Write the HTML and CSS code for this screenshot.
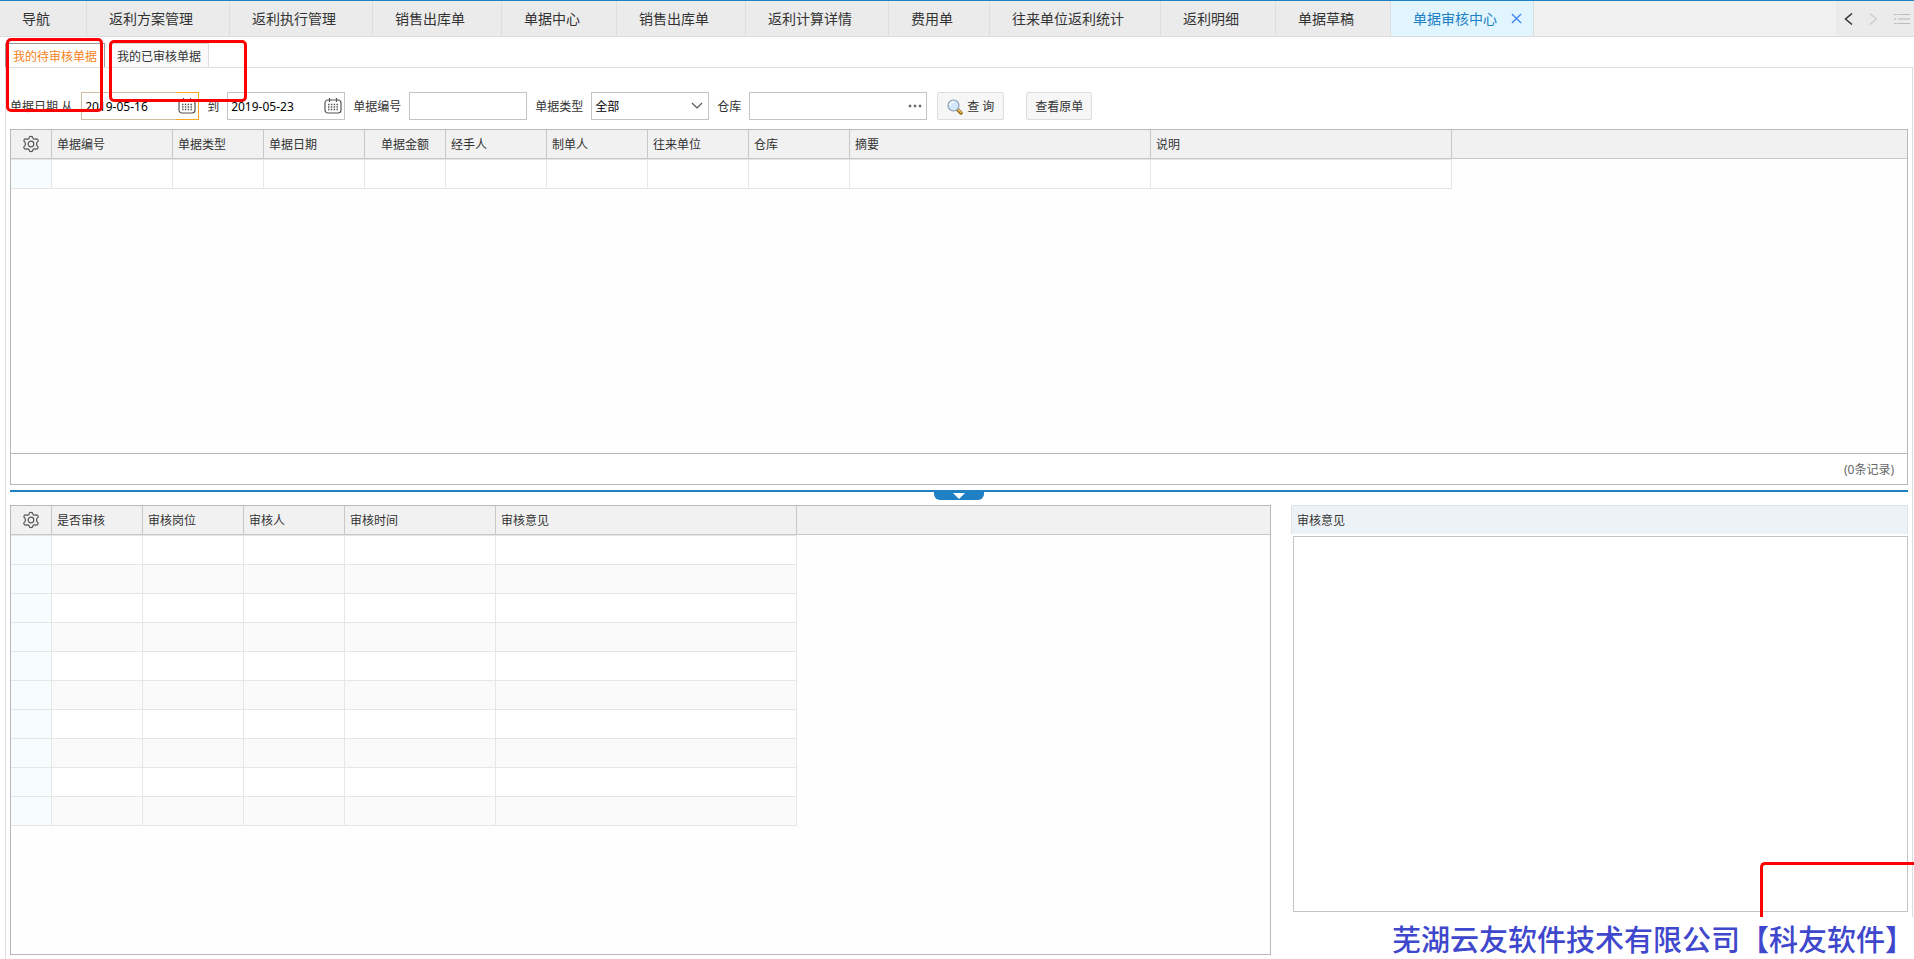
FILE: index.html
```html
<!DOCTYPE html>
<html lang="zh-CN">
<head>
<meta charset="utf-8">
<title>单据审核中心</title>
<link rel="stylesheet" href="styles.css">
</head>
<body>
<svg class="defs" aria-hidden="true">
  <symbol id="gear" viewBox="0 0 18 18"><path d="M7 3.200Q7.300 1.300 9 1.300T11 3.200Q11.500 4.600 13 4.100Q15 3.300 15.900 4.800T15.100 7.200Q13.800 9 15.100 10.800Q16.700 11.800 15.900 13.200T13 13.900Q11.500 13.400 11 14.800Q10.700 16.700 9 16.700T7 14.800Q6.500 13.400 5 13.900Q3 14.700 2.100 13.200T2.900 10.800Q4.200 9 2.900 7.200Q1.300 6.200 2.100 4.800T5 4.100Q6.500 4.600 7 3.200z" fill="none" stroke="#555" stroke-width="1.200" stroke-linejoin="round"/><circle cx="9" cy="9" r="2.800" fill="none" stroke="#555" stroke-width="1.200"/></symbol>
  <symbol id="calendar" viewBox="0 0 18 16"><rect x="1" y="2" width="16" height="13" rx="3" fill="none" stroke="#555" stroke-width="1.200"/><path d="M5.500 0v4M12.500 0v4" stroke="#555" stroke-width="1.200"/><path d="M4 6.500h10M4 9h10M4 11.500h10" stroke="#555" stroke-width="1.300" stroke-dasharray="1.500 1.330"/></symbol>
</svg>

<div class="app">
  <header class="topbar">
    <nav class="tabs">
      <button class="tab">导航</button>
      <button class="tab">返利方案管理</button>
      <button class="tab">返利执行管理</button>
      <button class="tab">销售出库单</button>
      <button class="tab">单据中心</button>
      <button class="tab">销售出库单</button>
      <button class="tab">返利计算详情</button>
      <button class="tab">费用单</button>
      <button class="tab">往来单位返利统计</button>
      <button class="tab">返利明细</button>
      <button class="tab">单据草稿</button>
      <button class="tab tab-active">单据审核中心<svg class="close" viewBox="0 0 12 12"><path d="M1 1l10 10M11 1L1 11" stroke="#4285f4" stroke-width="1.500"/></svg></button>
    </nav>
    <div class="tab-tools">
      <button class="tool" aria-label="向左"><svg width="9" height="12" viewBox="0 0 9 12"><path d="M8 .5L1.500 6 8 11.500" fill="none" stroke="#333" stroke-width="1.500"/></svg></button>
      <button class="tool" aria-label="向右"><svg width="9" height="12" viewBox="0 0 9 12"><path d="M1 .5L7.500 6 1 11.500" fill="none" stroke="#ccc" stroke-width="1.400"/></svg></button>
      <button class="tool" aria-label="列表"><svg width="16" height="12" viewBox="0 0 16 12"><path d="M0 1.500h3M4 1.500h12M0 10.500h3M4 10.500h12" stroke="#bbb"/><path d="M0 6h2M4 6h12" stroke="#d0d0d0" stroke-width="2"/></svg></button>
    </div>
  </header>

  <div class="subtabs">
    <button class="subtab subtab-active">我的待审核单据</button>
    <button class="subtab">我的已审核单据</button>
  </div>

  <main class="panel">
    <form class="filters">
      <label for="from">单据日期 从</label>
      <div class="field focused"><input id="from" type="text" value="2019-05-16"><button type="button" class="addon" aria-label="选择日期"><svg width="18" height="16"><use href="#calendar"/></svg></button></div>
      <label for="to">到</label>
      <div class="field"><input id="to" type="text" value="2019-05-23"><button type="button" class="addon" aria-label="选择日期"><svg width="18" height="16"><use href="#calendar"/></svg></button></div>
      <label for="no">单据编号</label>
      <div class="field"><input id="no" type="text"></div>
      <label for="type">单据类型</label>
      <div class="field"><select id="type"><option>全部</option></select><svg class="caret" width="12" height="8" viewBox="0 0 12 8"><path d="M1 1l5 5 5-5" fill="none" stroke="#555" stroke-width="1.200"/></svg></div>
      <label for="store">仓库</label>
      <div class="field wide"><input id="store" type="text"><button type="button" class="addon" aria-label="选择仓库"><svg width="14" height="4" viewBox="0 0 14 4"><g fill="#999" stroke="#555"><circle cx="2" cy="2" r="1"/><circle cx="7" cy="2" r="1"/><circle cx="12" cy="2" r="1"/></g></svg></button></div>
      <button type="button" class="btn btn-search"><svg width="16" height="16" viewBox="0 0 16 16"><path d="M10.500 10.500l3.500 3.500" stroke="#8a6418" stroke-width="3.400" stroke-linecap="round"/><path d="M11 10.500l3 3" stroke="#f0c555" stroke-width="1.600" stroke-linecap="round"/><circle cx="6.500" cy="6.500" r="5.500" fill="#d4e8fb" stroke="#8d9db0" stroke-width="1.200"/><path d="M3 6a3.500 3.500 0 0 1 4-3" stroke="#fff" stroke-width="1.500" fill="none"/></svg>查 询</button>
      <button type="button" class="btn btn-view">查看原单</button>
    </form>

    <section class="grid grid-main">
      <div class="grid-body">
        <table>
          <colgroup><col class="c41"><col class="c121"><col class="c91"><col class="c101"><col class="c81"><col class="c101"><col class="c101"><col class="c101"><col class="c101"><col class="c301"><col class="c301"><col></colgroup>
          <thead><tr><th class="cfg"><svg width="18" height="18"><use href="#gear"/></svg></th><th>单据编号</th><th>单据类型</th><th>单据日期</th><th class="num">单据金额</th><th>经手人</th><th>制单人</th><th>往来单位</th><th>仓库</th><th>摘要</th><th>说明</th><th class="rest"></th></tr></thead>
          <tbody><tr><td></td><td></td><td></td><td></td><td></td><td></td><td></td><td></td><td></td><td></td><td></td><td class="rest"></td></tr></tbody>
        </table>
      </div>
      <footer class="grid-foot">(0条记录)</footer>
    </section>

    <div class="splitter"><button class="handle" aria-label="收起"><svg width="12" height="6" viewBox="0 0 12 6"><path d="M0 0h12L6 6z" fill="#fff"/></svg></button></div>

    <div class="lower">
      <section class="grid grid-audit">
        <table>
          <colgroup><col class="c41"><col class="c91"><col class="c101"><col class="c101"><col class="c151"><col class="c301"><col></colgroup>
          <thead><tr><th class="cfg"><svg width="18" height="18"><use href="#gear"/></svg></th><th>是否审核</th><th>审核岗位</th><th>审核人</th><th>审核时间</th><th>审核意见</th><th class="rest"></th></tr></thead>
          <tbody>
            <tr><td></td><td></td><td></td><td></td><td></td><td></td><td class="rest"></td></tr>
            <tr><td></td><td></td><td></td><td></td><td></td><td></td><td class="rest"></td></tr>
            <tr><td></td><td></td><td></td><td></td><td></td><td></td><td class="rest"></td></tr>
            <tr><td></td><td></td><td></td><td></td><td></td><td></td><td class="rest"></td></tr>
            <tr><td></td><td></td><td></td><td></td><td></td><td></td><td class="rest"></td></tr>
            <tr><td></td><td></td><td></td><td></td><td></td><td></td><td class="rest"></td></tr>
            <tr><td></td><td></td><td></td><td></td><td></td><td></td><td class="rest"></td></tr>
            <tr><td></td><td></td><td></td><td></td><td></td><td></td><td class="rest"></td></tr>
            <tr><td></td><td></td><td></td><td></td><td></td><td></td><td class="rest"></td></tr>
            <tr><td></td><td></td><td></td><td></td><td></td><td></td><td class="rest"></td></tr>
          </tbody>
        </table>
      </section>
      <section class="opinion">
        <label class="opinion-title" for="opinion">审核意见</label>
        <textarea id="opinion"></textarea>
      </section>
    </div>
  </main>

  <div class="mark mark-pending"></div>
  <div class="mark mark-done"></div>
  <div class="mark mark-corner"></div>
  <div class="watermark">芜湖云友软件技术有限公司【科友软件】</div>
</div>
</body>
</html>
```
FILE: styles.css
```css
* { box-sizing: border-box; }
body {
  margin: 0;
  background: #fff;
  color: #333;
  font: 12px/16px "Noto Sans", "Noto Sans CJK SC", sans-serif;
}
button, input, select, textarea { font: inherit; color: inherit; margin: 0; }
button { padding: 0; border: 0; background: none; white-space: nowrap; }
svg { display: block; flex: none; }
.defs { position: absolute; width: 0; height: 0; }

.app {
  position: relative;
  display: flex;
  flex-direction: column;
  height: 100vh;
  overflow: hidden;
}

/* Top tab strip */
.topbar {
  display: flex;
  justify-content: space-between;
  height: 37px;
  background: #f1f1f1;
  border-top: 1px solid #2080c4;
  border-bottom: 1px solid #ddd;
}
.tabs { display: flex; }
.tab {
  display: flex;
  align-items: center;
  padding: 0 36px 0 22px;
  border-right: 1px solid #ddd;
  background: #ebebeb;
  font-size: 14px;
  line-height: 20px;
}
.tab-active { padding-right: 11px; background: #e0f5fd; color: #2080c4; }
.close { width: 11px; height: 11px; margin-left: 14px; }
.tab-tools {
  display: flex;
  align-items: center;
  gap: 16px;
  padding: 0 4px 0 8px;
  background: #ebebeb;
}

/* Secondary tabs */
.subtabs { display: flex; gap: 4px; padding: 6px 5px 0; }
.subtab {
  height: 24px;
  padding: 2px 7px 0;
  border: 1px solid #ddd;
  border-bottom: 0;
  background: #fafafa;
}
.subtab-active { border-color: #999; background: #fff; color: #f58220; }

.panel {
  flex: 1;
  min-height: 0;
  display: flex;
  flex-direction: column;
  margin: 0 1px 0 5px;
  padding: 24px 4px 4px;
  border: 1px solid #ddd;
  border-bottom: 0;
}

/* Filter row */
.filters { display: flex; align-items: center; gap: 8px; }
.filters label { padding-top: 2px; white-space: nowrap; }
.field {
  display: flex;
  align-items: center;
  width: 118px;
  height: 28px;
  border: 1px solid #c4c4c4;
  color: #000;
}
.field input, .field select {
  flex: 1;
  min-width: 0;
  height: 26px;
  padding: 1px 3px 0;
  border: 0;
  outline: 0;
  background: none;
  appearance: none;
}
.wide { width: 178px; }
.focused { border-color: #d0bea0; }
.addon {
  display: flex;
  align-items: center;
  justify-content: center;
  width: 22px;
  height: 26px;
}
.focused .addon { height: 28px; border: 1px solid #f5a623; border-width: 1px 0; box-shadow: 1px 0 #f5a623; }
.caret { margin-right: 5px; }
.btn {
  display: flex;
  align-items: center;
  height: 28px;
  padding: 1px 8px 0;
  border: 1px solid #ddd;
  border-radius: 2px;
  background: #f6f6f6;
}
.btn-search { gap: 4px; margin-left: 2px; padding: 1px 9px 0; }
.btn-view { margin-left: 14px; }

/* Grids */
.grid { border: 1px solid #b8b8b8; background: #fefefe; overflow: hidden; }
.grid-main {
  flex: 354 1 0;
  display: flex;
  flex-direction: column;
  margin-top: 9px;
}
.grid-body { flex: 1; }
.grid-foot {
  height: 31px;
  padding: 0 13px;
  border-top: 1px solid #b8b8b8;
  background: #fff;
  color: #666;
  line-height: 31px;
  text-align: right;
}
table { width: 100%; table-layout: fixed; border-collapse: separate; border-spacing: 0; }
.c41 { width: 41px; }
.c81 { width: 81px; }
.c91 { width: 91px; }
.c101 { width: 101px; }
.c121 { width: 121px; }
.c151 { width: 151px; }
.c301 { width: 301px; }
th {
  height: 29px;
  padding: 2px 5px 0;
  border-right: 1px solid #c8c8c8;
  border-bottom: 1px solid #c8c8c8;
  background: #f1f1f1;
  font-weight: normal;
  text-align: left;
}
th.cfg { padding: 0 11px; }
th.num { padding-right: 16px; text-align: right; }
th.rest { border-right: 0; }
td {
  height: 29px;
  padding: 0;
  border-right: 1px solid #e6e6e6;
  border-bottom: 1px solid #e6e6e6;
  background: #fff;
}
tr:nth-child(even) td { background: #fafafa; }
tbody tr:first-child td { height: 30px; border-top: 1px solid #e6e6e6; }
tbody td:first-child, tbody tr:nth-child(even) td:first-child { background: #f7fcff; }
tbody tr td.rest, tbody tr:first-child td.rest, tbody tr:nth-child(even) td.rest { border: 0; background: none; }

/* Splitter */
.splitter {
  display: flex;
  justify-content: center;
  height: 15px;
  margin: 5px 0 0;
  background: linear-gradient(#2080c4, #2080c4) top / 100% 2px no-repeat;
}
.handle {
  display: flex;
  align-items: center;
  justify-content: center;
  width: 50px;
  height: 10px;
  padding-top: 2px;
  border-radius: 0 0 6px 6px;
  background: #2080c4;
}

/* Lower area */
.lower { flex: 450 1 0; min-height: 0; display: flex; gap: 20px; }
.grid-audit { flex: 1259 1 0; }
.opinion { flex: 617 1 0; display: flex; flex-direction: column; margin-bottom: 43px; }
.opinion-title {
  height: 29px;
  padding: 0 5px;
  border: 1px solid #dde4ea;
  border-bottom: 0;
  background: #edf2f6;
  line-height: 29px;
}
.opinion textarea {
  flex: 1;
  margin: 2px 0 0 2px;
  border: 1px solid #c4c4c4;
  border-radius: 0;
  outline: 0;
  background: #fff;
  resize: none;
}

/* Highlight frames and credit line drawn over the page */
.mark { position: absolute; border: 3px solid #f00; border-radius: 5px; pointer-events: none; }
.mark-pending { left: 6px; top: 38px; width: 97px; height: 74px; }
.mark-done { left: 109px; top: 40px; width: 138px; height: 62px; }
.mark-corner {
  right: 0;
  bottom: 42px;
  width: 154px;
  height: 55px;
  border-width: 3px 0 0 3px;
  border-radius: 5px 0 0 0;
}
.watermark {
  position: absolute;
  right: 0;
  bottom: 0;
  background: #fff;
  color: #3f48cc;
  font: 500 29px/42px "Noto Sans CJK SC", sans-serif;
  white-space: nowrap;
}
```
